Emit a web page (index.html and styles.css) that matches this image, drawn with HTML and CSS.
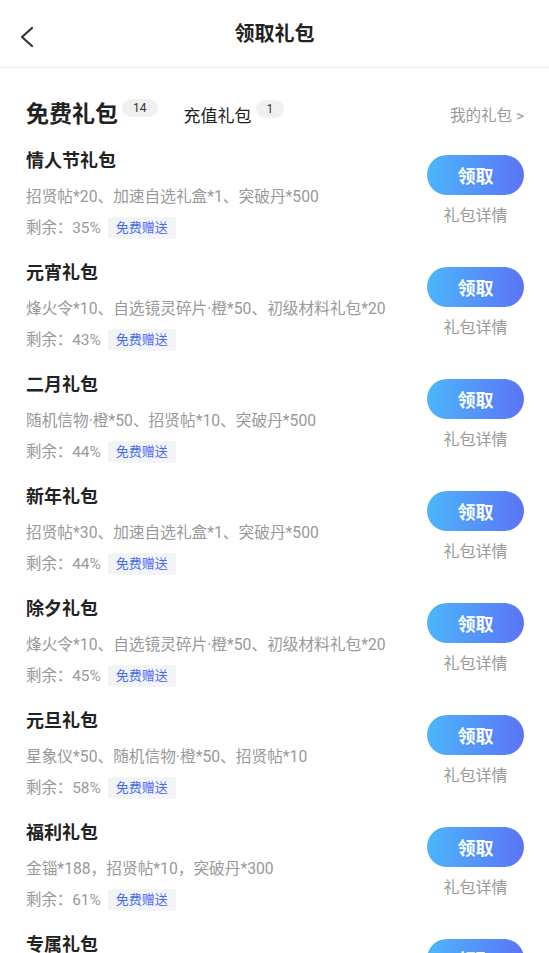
FILE: index.html
```html
<!DOCTYPE html>
<html lang="zh">
<head>
<meta charset="utf-8">
<link rel="stylesheet" href="styles.css">
</head>
<body>
<div class="page">
  <header class="topbar">
    <svg class="back" width="16" height="22" viewBox="0 0 16 22"><path d="M13 2 L3 11 L13 20" fill="none" stroke="#333" stroke-width="2.2" stroke-linecap="round" stroke-linejoin="round"/></svg>
    <h1 class="title">领取礼包</h1>
  </header>
  <section class="tabs">
    <div class="tab tab-active">免费礼包<span class="badge">14</span></div>
    <div class="tab">充值礼包<span class="badge">1</span></div>
    <div class="mine">我的礼包 &gt;</div>
  </section>
  <ul class="list">
    <li class="item">
      <div class="info">
        <div class="name">情人节礼包</div>
        <div class="desc">招贤帖*20、加速自选礼盒*1、突破丹*500</div>
        <div class="meta">剩余：35%<span class="tag">免费赠送</span></div>
      </div>
      <div class="act"><button class="btn">领取</button><div class="detail">礼包详情</div></div>
    </li>
    <li class="item">
      <div class="info">
        <div class="name">元宵礼包</div>
        <div class="desc">烽火令*10、自选镜灵碎片·橙*50、初级材料礼包*20</div>
        <div class="meta">剩余：43%<span class="tag">免费赠送</span></div>
      </div>
      <div class="act"><button class="btn">领取</button><div class="detail">礼包详情</div></div>
    </li>
    <li class="item">
      <div class="info">
        <div class="name">二月礼包</div>
        <div class="desc">随机信物·橙*50、招贤帖*10、突破丹*500</div>
        <div class="meta">剩余：44%<span class="tag">免费赠送</span></div>
      </div>
      <div class="act"><button class="btn">领取</button><div class="detail">礼包详情</div></div>
    </li>
    <li class="item">
      <div class="info">
        <div class="name">新年礼包</div>
        <div class="desc">招贤帖*30、加速自选礼盒*1、突破丹*500</div>
        <div class="meta">剩余：44%<span class="tag">免费赠送</span></div>
      </div>
      <div class="act"><button class="btn">领取</button><div class="detail">礼包详情</div></div>
    </li>
    <li class="item">
      <div class="info">
        <div class="name">除夕礼包</div>
        <div class="desc">烽火令*10、自选镜灵碎片·橙*50、初级材料礼包*20</div>
        <div class="meta">剩余：45%<span class="tag">免费赠送</span></div>
      </div>
      <div class="act"><button class="btn">领取</button><div class="detail">礼包详情</div></div>
    </li>
    <li class="item">
      <div class="info">
        <div class="name">元旦礼包</div>
        <div class="desc">星象仪*50、随机信物·橙*50、招贤帖*10</div>
        <div class="meta">剩余：58%<span class="tag">免费赠送</span></div>
      </div>
      <div class="act"><button class="btn">领取</button><div class="detail">礼包详情</div></div>
    </li>
    <li class="item">
      <div class="info">
        <div class="name">福利礼包</div>
        <div class="desc">金锱*188，招贤帖*10，突破丹*300</div>
        <div class="meta">剩余：61%<span class="tag">免费赠送</span></div>
      </div>
      <div class="act"><button class="btn">领取</button><div class="detail">礼包详情</div></div>
    </li>
    <li class="item item-last">
      <div class="info">
        <div class="name">专属礼包</div>
      </div>
      <div class="act"><button class="btn">领取</button></div>
    </li>
  </ul>
</div>
</body>
</html>
```
FILE: styles.css
```css
* { box-sizing: border-box; }
html, body { margin: 0; padding: 0; background: #fff; }
body {
  font-family: Roboto, "Noto Sans CJK SC", "Noto Sans", sans-serif;
  color: #222;
  height: 953px;
  overflow: hidden;
}
.topbar {
  position: relative;
  height: 68px;
  border-bottom: 1px solid #ececec;
  display: flex;
  align-items: center;
  justify-content: center;
}
.back {
  position: absolute;
  left: 19px;
  top: 26px;
}
.title {
  margin: 0;
  font-size: 20px;
  font-weight: 700;
  color: #222;
  line-height: 28px;
}
.tabs {
  display: flex;
  align-items: center;
  padding: 29px 25px 0 26px;
}
.tab {
  display: flex;
  align-items: flex-start;
  font-size: 17px;
  line-height: 34px;
  color: #222;
  margin-right: 26px;
  padding-top: 2px;
}
.tab-active {
  font-size: 23px;
  font-weight: 700;
  padding-top: 0;
}
.badge {
  font-size: 12px;
  font-weight: 400;
  line-height: 18px;
  height: 18px;
  padding: 0 11px;
  margin-left: 4px;
  margin-top: 1px;
  background: #f0f0f0;
  border-radius: 9px;
  color: #333;
}
.mine {
  margin-left: auto;
  font-size: 15.5px;
  color: #999;
  line-height: 34px;
  padding-top: 2px;
}
.list {
  list-style: none;
  margin: 0;
  padding: 16px 25px 0 26px;
}
.item {
  display: flex;
  justify-content: space-between;
  align-items: flex-start;
  height: 112px;
}
.info { display: flex; flex-direction: column; }
.name {
  font-size: 18px;
  font-weight: 700;
  line-height: 24px;
  color: #222;
}
.desc {
  margin-top: 12px;
  font-size: 15.7px;
  line-height: 24px;
  color: #999;
}
.meta {
  margin-top: 8px;
  display: flex;
  align-items: center;
  font-size: 15.4px;
  line-height: 22px;
  color: #999;
}
.tag {
  margin-left: 7px;
  font-size: 13px;
  line-height: 22px;
  padding: 0 8px;
  background: #f3f4f6;
  border-radius: 3px;
  color: #4b6cf5;
}
.act {
  margin-top: 6px;
  display: flex;
  flex-direction: column;
  align-items: center;
  width: 97px;
}
.btn {
  width: 97px;
  height: 40px;
  border: 0;
  border-radius: 20px;
  background: linear-gradient(90deg, #4db6fb 0%, #5a74f6 100%);
  color: #fff;
  font-family: inherit;
  font-size: 18px;
  font-weight: 700;
  padding: 0;
}
.detail {
  margin-top: 10px;
  font-size: 16px;
  line-height: 22px;
  color: #999;
}
```
